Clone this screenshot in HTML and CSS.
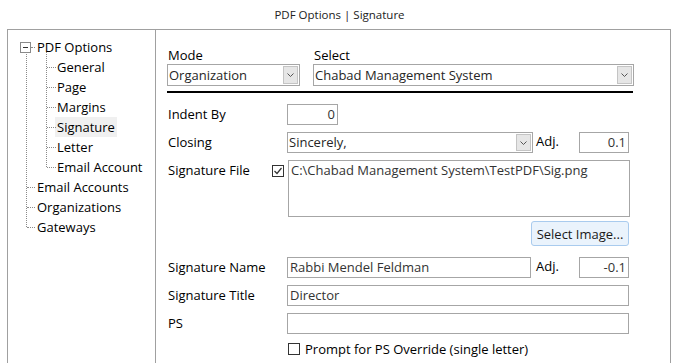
FILE: index.html
```html
<!DOCTYPE html>
<html lang="en">
<head>
  <meta charset="UTF-8">
  <title>PDF Options | Signature</title>
  <link rel="stylesheet" href="styles.css">
</head>
<body>

  <div class="title">PDF Options | Signature</div>

  <div class="frame">
    <div class="tree-panel">
      <ul class="tree">
        <li class="root-node">
          <span class="toggle"></span>
          <span class="node">PDF Options</span>
          <ul class="children">
            <li><span class="node">General</span></li>
            <li><span class="node">Page</span></li>
            <li><span class="node">Margins</span></li>
            <li><span class="node selected">Signature</span></li>
            <li><span class="node">Letter</span></li>
            <li><span class="node">Email Account</span></li>
          </ul>
        </li>
        <li><span class="node">Email Accounts</span></li>
        <li><span class="node">Organizations</span></li>
        <li><span class="node">Gateways</span></li>
      </ul>
    </div>

    <div class="content">
      <div class="mode-row">
        <div class="mode-col">
          <div class="top-label">Mode</div>
          <div class="combo">
            <span class="combo-text">Organization</span>
            <span class="combo-btn"><svg width="7" height="4" viewBox="0 0 7 4"><path d="M0.5 0.5 L3.5 3.5 L6.5 0.5" fill="none" stroke="#555" stroke-width="1"/></svg></span>
          </div>
        </div>
        <div class="select-col">
          <div class="top-label">Select</div>
          <div class="combo">
            <span class="combo-text">Chabad Management System</span>
            <span class="combo-btn"><svg width="7" height="4" viewBox="0 0 7 4"><path d="M0.5 0.5 L3.5 3.5 L6.5 0.5" fill="none" stroke="#555" stroke-width="1"/></svg></span>
          </div>
        </div>
      </div>

      <div class="rule"></div>

      <div class="form">
        <div class="row">
          <label class="label">Indent By</label>
          <div class="field num indent">0</div>
        </div>

        <div class="row">
          <label class="label">Closing</label>
          <div class="combo closing">
            <span class="combo-text">Sincerely,</span>
            <span class="combo-btn"><svg width="7" height="4" viewBox="0 0 7 4"><path d="M0.5 0.5 L3.5 3.5 L6.5 0.5" fill="none" stroke="#555" stroke-width="1"/></svg></span>
          </div>
          <label class="adj">Adj.</label>
          <div class="field num adj-field">0.1</div>
        </div>

        <div class="row">
          <label class="label">Signature File</label>
          <span class="check checked"><svg width="10" height="10" viewBox="0 0 10 10"><path d="M1.5 5 L4 7.5 L8.5 2" fill="none" stroke="#333" stroke-width="1.2"/></svg></span>
          <div class="field area">C:\Chabad Management System\TestPDF\Sig.png</div>
        </div>

        <div class="button-row">
          <button class="select-btn">Select Image...</button>
        </div>

        <div class="row">
          <label class="label">Signature Name</label>
          <div class="field sig-name">Rabbi Mendel Feldman</div>
          <label class="adj adj-name">Adj.</label>
          <div class="field num adj-field">-0.1</div>
        </div>

        <div class="row">
          <label class="label">Signature Title</label>
          <div class="field wide">Director</div>
        </div>

        <div class="row">
          <label class="label">PS</label>
          <div class="field wide"></div>
        </div>

        <div class="check-row">
          <span class="check"></span>
          <span class="check-label">Prompt for PS Override (single letter)</span>
        </div>
      </div>
    </div>
  </div>

</body>
</html>
```

FILE: styles.css
```css
body {
  margin: 0;
  background-color: #fff;
  font-family: "Open Sans", "Noto Sans", sans-serif;
  font-size: 13px;
  color: #000;
  height: 363px;
  overflow: hidden;
}
.title {
  height: 29px;
  line-height: 30px;
  text-align: center;
  font-size: 11.5px;
  color: #222;
}
.frame {
  display: flex;
  margin-left: 7px;
  width: 662px;
  height: 333px;
  border: 1px solid #a0a0a0;
  border-bottom: none;
}

/* tree on the left */
.tree-panel {
  width: 147px;
  border-right: 1px solid #a0a0a0;
}
.tree,
.tree ul {
  list-style: none;
  margin: 0;
  padding: 0;
}
.tree {
  position: relative;
  padding-top: 7px;
}
.tree > li {
  position: relative;
  padding-left: 29px;
  line-height: 20px;
}
/* dotted root line */
.tree::before {
  content: "";
  position: absolute;
  left: 18px;
  top: 22px;
  height: 175px;
  border-left: 1px dotted #8a8a8a;
}
.tree > li::before {
  content: "";
  position: absolute;
  left: 19px;
  top: 10px;
  width: 8px;
  border-top: 1px dotted #8a8a8a;
}
.tree > li.root-node::before {
  left: 23px;
  width: 4px;
}
.toggle {
  position: absolute;
  left: 12px;
  top: 5px;
  width: 9px;
  height: 9px;
  border: 1px solid #8a8a8a;
  background: #fff;
  z-index: 1;
}
.toggle::after {
  content: "";
  position: absolute;
  left: 2px;
  top: 4px;
  width: 5px;
  border-top: 1px solid #333;
}
.children {
  position: relative;
}
.children::before {
  content: "";
  position: absolute;
  left: 9px;
  top: -5px;
  height: 115px;
  border-left: 1px dotted #8a8a8a;
}
.children li {
  position: relative;
  padding-left: 20px;
}
.children li::before {
  content: "";
  position: absolute;
  left: 10px;
  top: 10px;
  width: 9px;
  border-top: 1px dotted #8a8a8a;
}
.node {
  padding: 0 2px;
  margin-left: -2px;
  display: inline-block;
}
.node.selected {
  background-color: #f0f0f0;
}

/* right side form */
.content {
  flex: 1;
  padding: 16px 0 0 11px;
}
.mode-row {
  display: flex;
  gap: 13px;
}
.mode-col {
  width: 133px;
}
.select-col {
  width: 321px;
}
.top-label {
  line-height: 18px;
  padding-left: 1px;
}
.combo {
  display: flex;
  box-sizing: border-box;
  height: 22px;
  border: 1px solid #a6a6a6;
  color: #262626;
}
.combo-text {
  flex: 1;
  line-height: 20px;
  padding-left: 1px;
  white-space: nowrap;
  overflow: hidden;
}
.combo-btn {
  width: 15px;
  margin: 1px;
  box-sizing: border-box;
  border: 1px solid #c4c4c4;
  background-color: #e6e6e6;
  display: flex;
  align-items: center;
  justify-content: center;
}
.rule {
  width: 466px;
  height: 2px;
  background-color: #000;
  margin-top: 5px;
}
.form {
  padding-top: 11px;
}
.row {
  display: flex;
  align-items: flex-start;
  margin-bottom: 7px;
}
.label {
  width: 120px;
  line-height: 20px;
  padding-left: 1px;
  box-sizing: border-box;
}
.field {
  box-sizing: border-box;
  height: 21px;
  border: 1px solid #a6a6a6;
  line-height: 19px;
  padding: 0 2px;
  color: #333;
  white-space: nowrap;
}
.num {
  text-align: right;
}
.indent {
  width: 51px;
}
.combo.closing {
  width: 246px;
  height: 21px;
}
.combo.closing .combo-text {
  line-height: 19px;
}
.adj {
  width: 43px;
  box-sizing: border-box;
  margin-left: 3px;
  line-height: 19px;
}
.adj-name {
  margin-left: 5px;
}
.adj-field {
  width: 50px;
}
.check {
  width: 12px;
  height: 12px;
  box-sizing: border-box;
  border: 1px solid #333;
  display: flex;
  align-items: center;
  justify-content: center;
}
.row .check {
  margin: 5px 4px 0 -15px;
}
.area {
  width: 342px;
  height: 57px;
  white-space: normal;
}
.button-row {
  display: flex;
  justify-content: flex-end;
  width: 462px;
  margin-top: -3px;
  margin-bottom: 11px;
}
.select-btn {
  font-family: inherit;
  font-size: 13px;
  color: #1a1a1a;
  height: 25px;
  padding: 0 4px;
  width: 98px;
  background-color: #eaf3fc;
  border: 1px solid #a9cbee;
  border-radius: 3px;
}
.sig-name {
  width: 244px;
}
.wide {
  width: 342px;
}
.check-row {
  display: flex;
  align-items: center;
  gap: 5px;
  padding-left: 121px;
  margin-top: 3px;
}
.check-label {
  line-height: 16px;
}
```
